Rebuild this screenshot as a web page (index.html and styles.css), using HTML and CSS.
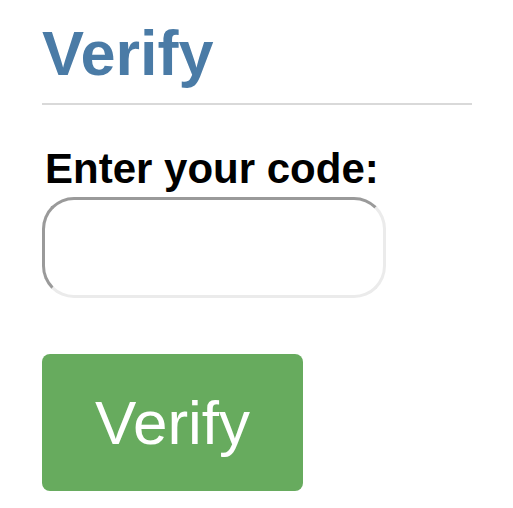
FILE: index.html
```html
<!DOCTYPE html>
<html>
<head>
<meta charset="utf-8">
<link rel="stylesheet" href="styles.css">
</head>
<body>
<main class="page">
  <h1 class="title">Verify</h1>
  <form class="form">
    <label class="label" for="code">Enter your code:</label>
    <input class="code-input" id="code" type="text">
    <button class="btn" type="button">Verify</button>
  </form>
</main>
</body>
</html>
```
FILE: styles.css
```css
html, body {
  margin: 0;
  padding: 0;
  background: #ffffff;
}
body {
  font-family: "Liberation Sans", Arial, sans-serif;
}
.page {
  width: 430px;
  margin: 0 0 0 42px;
  padding-top: 22px;
}
.title {
  margin: 0;
  font-size: 63px;
  line-height: 62px;
  font-weight: bold;
  color: #4a7ba6;
  padding-bottom: 19px;
  border-bottom: 2px solid #d9d9d9;
}
.form {
  display: flex;
  flex-direction: column;
  align-items: flex-start;
  padding-top: 43px;
}
.label {
  font-size: 42px;
  line-height: 42px;
  font-weight: bold;
  color: #000;
  margin-left: 3px;
}
.code-input {
  box-sizing: border-box;
  width: 344px;
  height: 101px;
  margin-top: 7px;
  border: 3px solid;
  border-color: #9a9a9a #ebebeb #ebebeb #9a9a9a;
  border-radius: 32px;
  background: #fff;
  outline: none;
  padding: 0 20px;
  font-size: 40px;
}
.btn {
  box-sizing: border-box;
  width: 261px;
  height: 137px;
  margin-top: 56px;
  border: none;
  border-radius: 8px;
  background: #67ab5e;
  color: #fff;
  font-family: "Liberation Sans", Arial, sans-serif;
  font-size: 62px;
  padding: 0;
}
```
